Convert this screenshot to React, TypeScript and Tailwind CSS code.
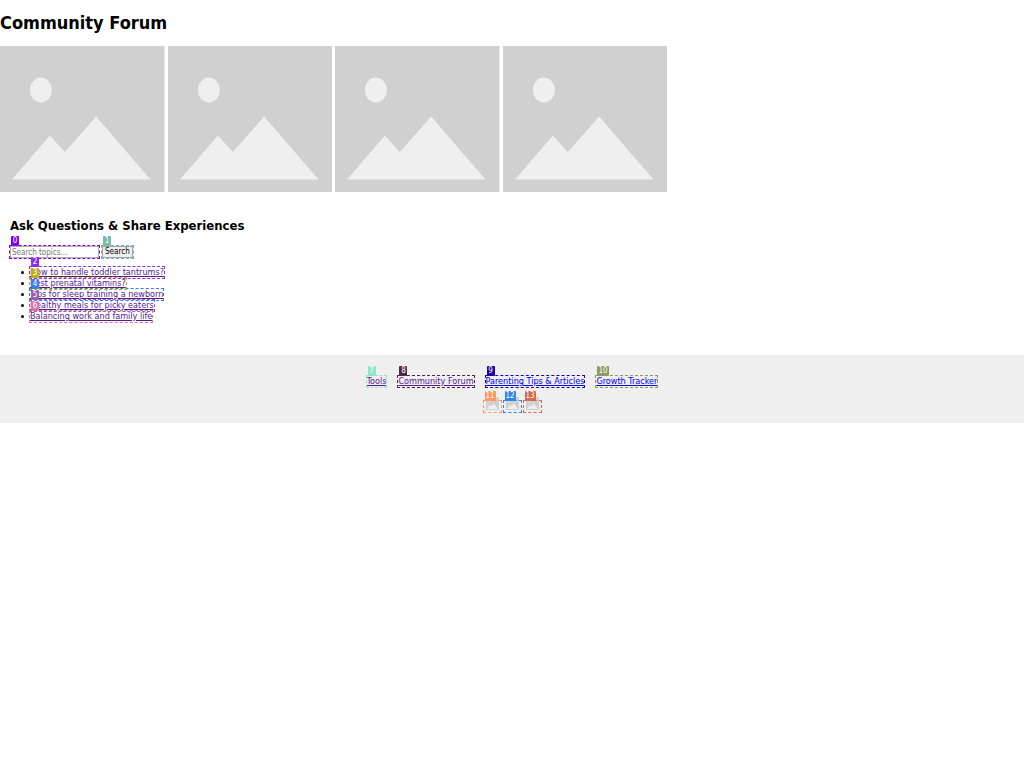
import type { ReactNode } from "react";

type Mark = { n: number; box: string; badge: string };

function Placeholder({ className }: { className: string }) {
  return (
    <svg className={className} viewBox="0 0 165 146" preserveAspectRatio="none" aria-hidden="true">
      <rect width="165" height="146" fill="#d0d0d0" />
      <ellipse cx="41" cy="44" rx="11" ry="12.4" fill="#efefef" />
      <path d="M12 133.5 50 89.5 65 106 96.5 70.5 151 133.5Z" fill="#efefef" />
    </svg>
  );
}

function Marked({ mark, children }: { mark: Mark; children: ReactNode }) {
  return (
    <span className="relative inline-flex">
      {children}
      <span className={`pointer-events-none absolute -inset-px border border-dashed ${mark.box}`} />
      <span
        className={`pointer-events-none absolute bottom-full left-px flex h-[10px] min-w-2 items-center justify-center rounded-[1px] px-px text-[8px] leading-none text-white ${mark.badge}`}
      >
        {mark.n}
      </span>
    </span>
  );
}

const topics = [
  { text: "How to handle toddler tantrums?", mark: { n: 2, box: "border-[#8a2bf5]", badge: "bg-[#8a2bf5]" } },
  { text: "Best prenatal vitamins?", mark: { n: 3, box: "border-[#c4ae20]", badge: "bg-[#c4ae20]" } },
  { text: "Tips for sleep training a newborn", mark: { n: 4, box: "border-[#3a7bee]", badge: "bg-[#3a7bee]" } },
  { text: "Healthy meals for picky eaters", mark: { n: 5, box: "border-[#9860b4]", badge: "bg-[#9860b4]" } },
  { text: "Balancing work and family life", mark: { n: 6, box: "border-[#d878a8]", badge: "bg-[#d878a8]" } },
];

const pages = [
  { text: "Tools", color: "text-[#551a8b]", mark: { n: 7, box: "border-[#8ce6c8]", badge: "bg-[#8ce6c8]" } },
  { text: "Community Forum", color: "text-[#551a8b]", mark: { n: 8, box: "border-[#522648]", badge: "bg-[#522648]" } },
  { text: "Parenting Tips & Articles", color: "text-[#0000ee]", mark: { n: 9, box: "border-[#2200a8]", badge: "bg-[#2200a8]" } },
  { text: "Growth Tracker", color: "text-[#0000ee]", mark: { n: 10, box: "border-[#8c9a5c]", badge: "bg-[#8c9a5c]" } },
];

const socials = [
  { name: "Facebook", mark: { n: 11, box: "border-[#fd9860]", badge: "bg-[#fd9860]" } },
  { name: "Twitter", mark: { n: 12, box: "border-[#2f86ea]", badge: "bg-[#2f86ea]" } },
  { name: "Instagram", mark: { n: 13, box: "border-[#d86848]", badge: "bg-[#d86848]" } },
];

export default function App() {
  return (
    <div className="bg-white font-['DejaVu_Sans_Condensed','DejaVu_Sans',sans-serif] text-[9px] leading-[11px] text-black">
      <header className="pt-3 pb-3">
        <h1 className="text-[18px] leading-[22px] font-bold">Community Forum</h1>
      </header>
      <div className="grid w-full max-w-[667px] grid-cols-4 gap-[3px]">
        {[0, 1, 2, 3].map((i) => (
          <Placeholder key={i} className="block h-[146px] w-full" />
        ))}
      </div>

      <main className="px-[10px] pt-6 pb-[33px]">
        <h2 className="text-[13px] leading-5 font-bold">Ask Questions &amp; Share Experiences</h2>
        <form className="mt-[10px] flex gap-[3px]" onSubmit={(e) => e.preventDefault()}>
          <Marked mark={{ n: 0, box: "border-[#8000f0]", badge: "bg-[#8000f0]" }}>
            <input
              type="text"
              aria-label="Search topics"
              placeholder="Search topics..."
              className="h-3 w-[89px] border border-[#b0b0b0] bg-white px-px text-[8px] leading-[10px] placeholder:text-[#757575]"
            />
          </Marked>
          <Marked mark={{ n: 1, box: "border-[#78bcb0]", badge: "bg-[#78bcb0]" }}>
            <button type="submit" className="h-3 border border-[#a0a0a0] bg-[#efefef] px-[2px] text-[8px] leading-[10px]">
              Search
            </button>
          </Marked>
        </form>
        <ul className="mt-[9px] pl-[11px]">
          {topics.map((t) => (
            <li
              key={t.text}
              className="flex h-[11px] items-center gap-[6px] before:size-[3px] before:rounded-full before:bg-black before:content-['']"
            >
              <Marked mark={t.mark}>
                <a href="#topic" className="text-[#551a8b] underline">
                  {t.text}
                </a>
              </Marked>
            </li>
          ))}
        </ul>
      </main>

      <footer className="flex flex-col items-center bg-[#efefef] pt-[21px] pb-[11px]">
        <nav className="flex gap-3">
          {pages.map((p) => (
            <Marked key={p.text} mark={p.mark}>
              <a href="#page" className={`underline ${p.color}`}>
                {p.text}
              </a>
            </Marked>
          ))}
        </nav>
        <div className="mt-[14px] flex gap-[3px]">
          {socials.map((s) => (
            <Marked key={s.name} mark={s.mark}>
              <a href="#social" aria-label={s.name} className="block h-[11px] w-[17px]">
                <Placeholder className="mx-auto -mt-1 block h-[13px] w-[13px]" />
              </a>
            </Marked>
          ))}
        </div>
      </footer>
    </div>
  );
}
